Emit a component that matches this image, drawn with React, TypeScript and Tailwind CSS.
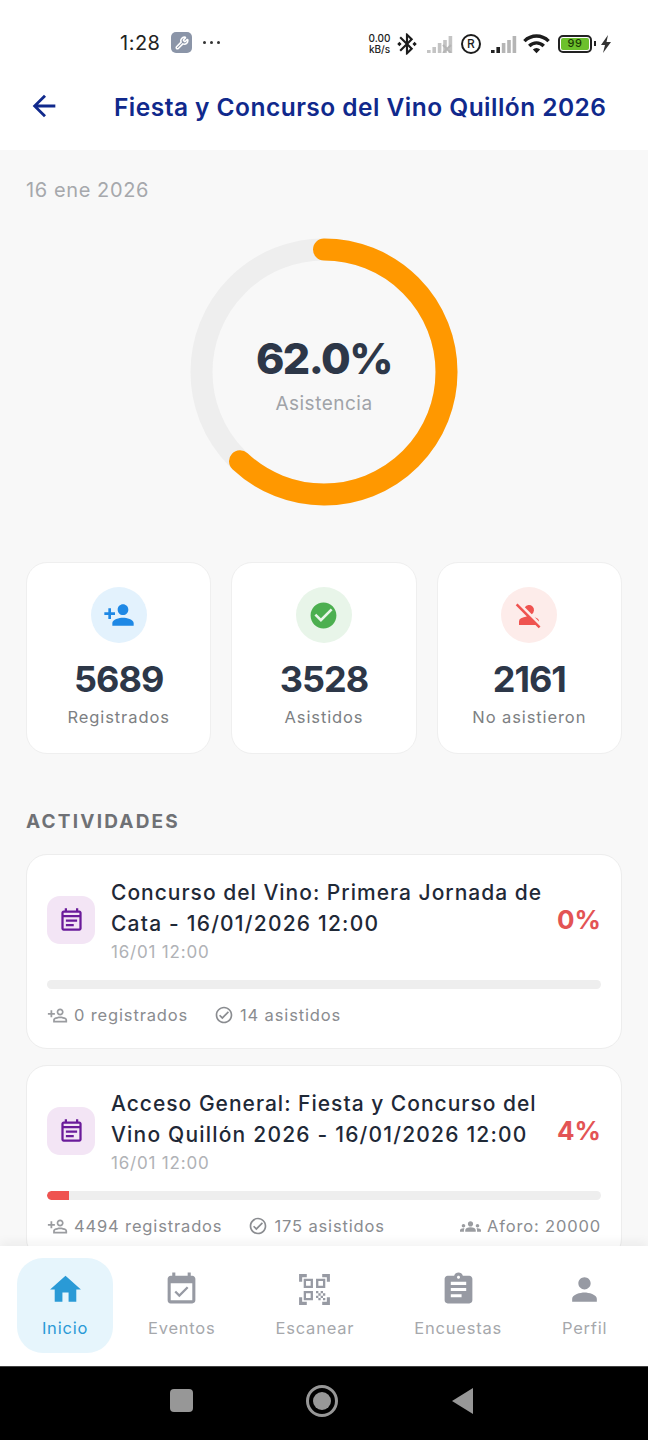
import {
  MdArrowBack,
  MdAssignment,
  MdBluetoothConnected,
  MdCheckCircle,
  MdEventAvailable,
  MdGroups,
  MdHome,
  MdOutlineCheckCircle,
  MdOutlineEventNote,
  MdOutlinePersonAddAlt,
  MdPerson,
  MdPersonAdd,
  MdPersonOff,
  MdQrCodeScanner,
  MdWifi,
} from "react-icons/md";
import { Wrench } from "lucide-react";
import type { ReactNode } from "react";

const font = "font-['Inter','Noto_Sans',sans-serif]";

// Mobile signal bars; `level` of them are dark, the rest stay faded.
function Signal({ level, crossed }: { level: number; crossed?: boolean }) {
  const bars = [3, 6, 10, 13, 17];
  return (
    <svg width="27" height="18" viewBox="0 0 27 18">
      {bars.map((h, i) => (
        <rect
          key={h}
          x={1 + i * 5.4}
          y={18 - h}
          width="3.6"
          height={h}
          fill={i < level ? "#222222" : crossed ? "#c4c4c4" : "#b5b5b5"}
        />
      ))}
      {crossed && (
        <path d="M17 10l8 8M25 10l-8 8" stroke="#b5b5b5" strokeWidth="2" />
      )}
    </svg>
  );
}

function StatusBar() {
  return (
    <div className="flex h-[75px] shrink-0 items-start bg-white pl-[120px] pr-[36px] pt-[29px]">
      <span className="text-[20px] leading-[28px] tracking-[0.5px] text-[#222222]">1:28</span>
      <span className="ml-[11px] mt-[3px] flex h-[21px] w-[21px] items-center justify-center rounded-[5px] bg-[#8b95a8]">
        <Wrench size={14} color="#ffffff" strokeWidth={2.6} />
      </span>
      <span className="ml-[11px] mt-[12px] flex gap-[4px]">
        <i className="h-[3px] w-[3px] rounded-full bg-[#333333]" />
        <i className="h-[3px] w-[3px] rounded-full bg-[#333333]" />
        <i className="h-[3px] w-[3px] rounded-full bg-[#333333]" />
      </span>
      <div className="ml-auto flex items-center">
        <span className="w-[25px] text-center text-[10px] font-medium leading-[11px] text-[#222222]">
          0.00
          <br />
          kB/s
        </span>
        <MdBluetoothConnected size={26} color="#1c1c1c" className="ml-[2px]" />
        <span className="ml-[6px]">
          <Signal level={0} crossed />
        </span>
        <span className="ml-[8px] flex h-[20px] w-[20px] items-center justify-center rounded-full border-2 border-[#1c1c1c] text-[12px] font-medium text-[#1c1c1c]">
          R
        </span>
        <span className="ml-[9px]">
          <Signal level={2} />
        </span>
        <MdWifi size={29} color="#1c1c1c" className="ml-[5px]" />
        <span className="ml-[7px] flex h-[18px] w-[34px] items-center justify-center rounded-[5px] border-2 border-[#222222] p-[1px]">
          <span className="flex h-full w-full items-center justify-center rounded-[2px] bg-[#6cc02c] text-[11px] font-medium leading-none tracking-[0.5px] text-[#1d3a05]">
            99
          </span>
        </span>
        <i className="ml-[2px] h-[5px] w-[2px] bg-[#222222]" />
        <svg width="12" height="18" viewBox="0 0 12 18" className="ml-[4px]">
          <path d="M8 0L1 10h4l-2 8 8-11H6.500z" fill="#333333" />
        </svg>
      </div>
    </div>
  );
}

function Header() {
  return (
    <div className="flex h-[75px] shrink-0 items-start bg-white pl-[27px] pt-[14px]">
      <MdArrowBack size={34} color="#10298c" />
      <h1 className="ml-[53px] whitespace-nowrap text-[24.500px] font-semibold leading-[36px] tracking-[0.47px] text-[#10298c]">
        Fiesta y Concurso del Vino Quillón 2026
      </h1>
    </div>
  );
}

function Ring() {
  const r = 122.5;
  const c = 2 * Math.PI * r;
  return (
    <div className="relative mx-auto mt-[35px] h-[268px] w-[268px]">
      <svg width="268" height="268" viewBox="0 0 268 268" className="-rotate-90">
        <circle cx="134" cy="134" r={r} fill="none" stroke="#eeeeee" strokeWidth="22" />
        <circle
          cx="134"
          cy="134"
          r={r}
          fill="none"
          stroke="#ff9800"
          strokeWidth="22"
          strokeLinecap="round"
          strokeDasharray={`${c * 0.62} ${c}`}
        />
      </svg>
      <div className="absolute inset-0 flex flex-col items-center pt-[93px]">
        <span className="text-[43px] font-extrabold leading-[54px] tracking-[-1.5px] text-[#2d3748]">
          62.0%
        </span>
        <span className="mt-[6px] text-[19px] leading-[26px] tracking-[0.5px] text-[#a0a3a8]">
          Asistencia
        </span>
      </div>
    </div>
  );
}

function StatCard({
  icon,
  tint,
  value,
  label,
}: {
  icon: ReactNode;
  tint: string;
  value: string;
  label: string;
}) {
  return (
    <div className="flex h-[192px] flex-col items-center rounded-[21px] border border-[#efefef] bg-white pt-[24px]">
      <div className={`flex h-[56px] w-[56px] items-center justify-center rounded-full ${tint}`}>
        {icon}
      </div>
      <div className="mt-[14px] text-[36px] font-bold leading-[44px] tracking-[-1px] text-[#2d3748]">
        {value}
      </div>
      <div className="mt-[3px] text-[16.500px] leading-[26px] tracking-[0.9px] text-[#7d7f83]">
        {label}
      </div>
    </div>
  );
}

function ActivityCard({
  title,
  percent,
  fill,
  registered,
  attended,
  capacity,
}: {
  title: [string, string];
  percent: string;
  fill: number;
  registered: string;
  attended: string;
  capacity?: string;
}) {
  return (
    <div className="shrink-0 rounded-[21px] border border-[#ededed] bg-white px-[20px] pb-[21px] pt-[22px]">
      <div className="flex items-center">
        <div className="mt-[-2px] flex h-[48px] w-[48px] shrink-0 items-center justify-center rounded-[13px] bg-[#f3e5f5]">
          <MdOutlineEventNote size={27} color="#6a1b9a" />
        </div>
        <div className="ml-[16px] min-w-0 flex-1">
          <div className="whitespace-nowrap text-[21px] font-medium leading-[31px] tracking-[1px] text-[#1f2937]">
            {title[0]}
            <br />
            <span className="tracking-[1.2px]">{title[1]}</span>
          </div>
          <div className="text-[17px] leading-[26px] tracking-[0.8px] text-[#b0b2b6]">16/01 12:00</div>
        </div>
        <div className="mt-[-2px] text-[26px] font-bold leading-none text-[#e35454]">{percent}</div>
      </div>
      <div className="mt-[15px] h-[9px] overflow-hidden rounded-full bg-[#eeeeee]">
        <div className="h-full rounded-l-full bg-[#ef5350]" style={{ width: `${fill}%` }} />
      </div>
      <div className="mt-[14px] flex items-center text-[16.500px] leading-[24px] tracking-[0.85px] text-[#8a8c90]">
        <MdOutlinePersonAddAlt size={21} color="#9a9ca0" className="-scale-x-100" />
        <span className="ml-[6px]">{registered}</span>
        <MdOutlineCheckCircle size={20} color="#8a8c90" className="ml-[26px]" />
        <span className="ml-[6px]">{attended}</span>
        {capacity && (
          <>
            <MdGroups size={21} color="#9a9ca0" className="ml-auto" />
            <span className="ml-[6px]">{capacity}</span>
          </>
        )}
      </div>
    </div>
  );
}

function NavItem({
  icon,
  label,
  active,
}: {
  icon: ReactNode;
  label: string;
  active?: boolean;
}) {
  return (
    <div
      className={`flex h-[95px] flex-col items-center rounded-[26px] pt-[13px] ${
        active ? "mr-[5px] w-[96px] bg-[#e6f5fc] text-[#2a9ad6]" : "px-[30px] text-[#a6a8ac]"
      }`}
    >
      {icon}
      <span className="mt-[8px] whitespace-nowrap text-[16.500px] leading-[24px] tracking-[0.78px]">
        {label}
      </span>
    </div>
  );
}

function BottomNav() {
  return (
    <nav className="relative z-10 flex h-[120px] shrink-0 items-start bg-white pl-[17px] pt-[12px] shadow-[0_-4px_10px_rgba(0,0,0,0.05)]">
      <NavItem active label="Inicio" icon={<MdHome size={37} color="#2a9ad6" />} />
      <NavItem label="Eventos" icon={<MdEventAvailable size={37} color="#979aa3" />} />
      <NavItem label="Escanear" icon={<MdQrCodeScanner size={37} color="#979aa3" />} />
      <NavItem label="Encuestas" icon={<MdAssignment size={37} color="#979aa3" />} />
      <NavItem label="Perfil" icon={<MdPerson size={37} color="#979aa3" />} />
    </nav>
  );
}

function SystemBar() {
  return (
    <div className="flex h-[74px] shrink-0 items-center border-t border-[#444444] bg-black pb-[6px] pl-[170px]">
      <span className="h-[23px] w-[23px] rounded-[4px] bg-[#979797]" />
      <span className="ml-[113px] flex h-[32px] w-[32px] items-center justify-center rounded-full border-[3px] border-[#979797]">
        <i className="h-[18px] w-[18px] rounded-full bg-[#979797]" />
      </span>
      <svg width="22" height="26" viewBox="0 0 22 26" className="ml-[114px]">
        <path d="M0 13L21 0v26z" fill="#979797" />
      </svg>
    </div>
  );
}

export default function App() {
  return (
    <div className={`flex h-[1440px] w-[648px] flex-col overflow-hidden bg-[#f8f8f8] ${font}`}>
      <StatusBar />
      <Header />
      <main className="flex min-h-0 flex-1 flex-col overflow-hidden px-[26px] pt-[27px]">
        <div className="text-[20px] leading-[26px] tracking-[0.6px] text-[#a6a8ac]">16 ene 2026</div>
        <Ring />
        <div className="mt-[56px] grid shrink-0 grid-cols-3 gap-[20px]">
          <StatCard
            tint="bg-[#e3f2fd]"
            value="5689"
            label="Registrados"
            icon={<MdPersonAdd size={32} color="#1e88e5" />}
          />
          <StatCard
            tint="bg-[#e8f5e9]"
            value="3528"
            label="Asistidos"
            icon={<MdCheckCircle size={31} color="#4caf50" />}
          />
          <StatCard
            tint="bg-[#fdecea]"
            value="2161"
            label="No asistieron"
            icon={<MdPersonOff size={30} color="#ef5350" />}
          />
        </div>
        <h2 className="mt-[55px] text-[19px] font-bold leading-[26px] tracking-[2.2px] text-[#6f7175]">
          ACTIVIDADES
        </h2>
        <div className="mt-[19px] flex flex-col gap-[16px]">
          <ActivityCard
            title={["Concurso del Vino: Primera Jornada de", "Cata - 16/01/2026 12:00"]}
            percent="0%"
            fill={0}
            registered="0 registrados"
            attended="14 asistidos"
          />
          <ActivityCard
            title={["Acceso General: Fiesta y Concurso del", "Vino Quillón 2026 - 16/01/2026 12:00"]}
            percent="4%"
            fill={4}
            registered="4494 registrados"
            attended="175 asistidos"
            capacity="Aforo: 20000"
          />
        </div>
      </main>
      <BottomNav />
      <SystemBar />
    </div>
  );
}
